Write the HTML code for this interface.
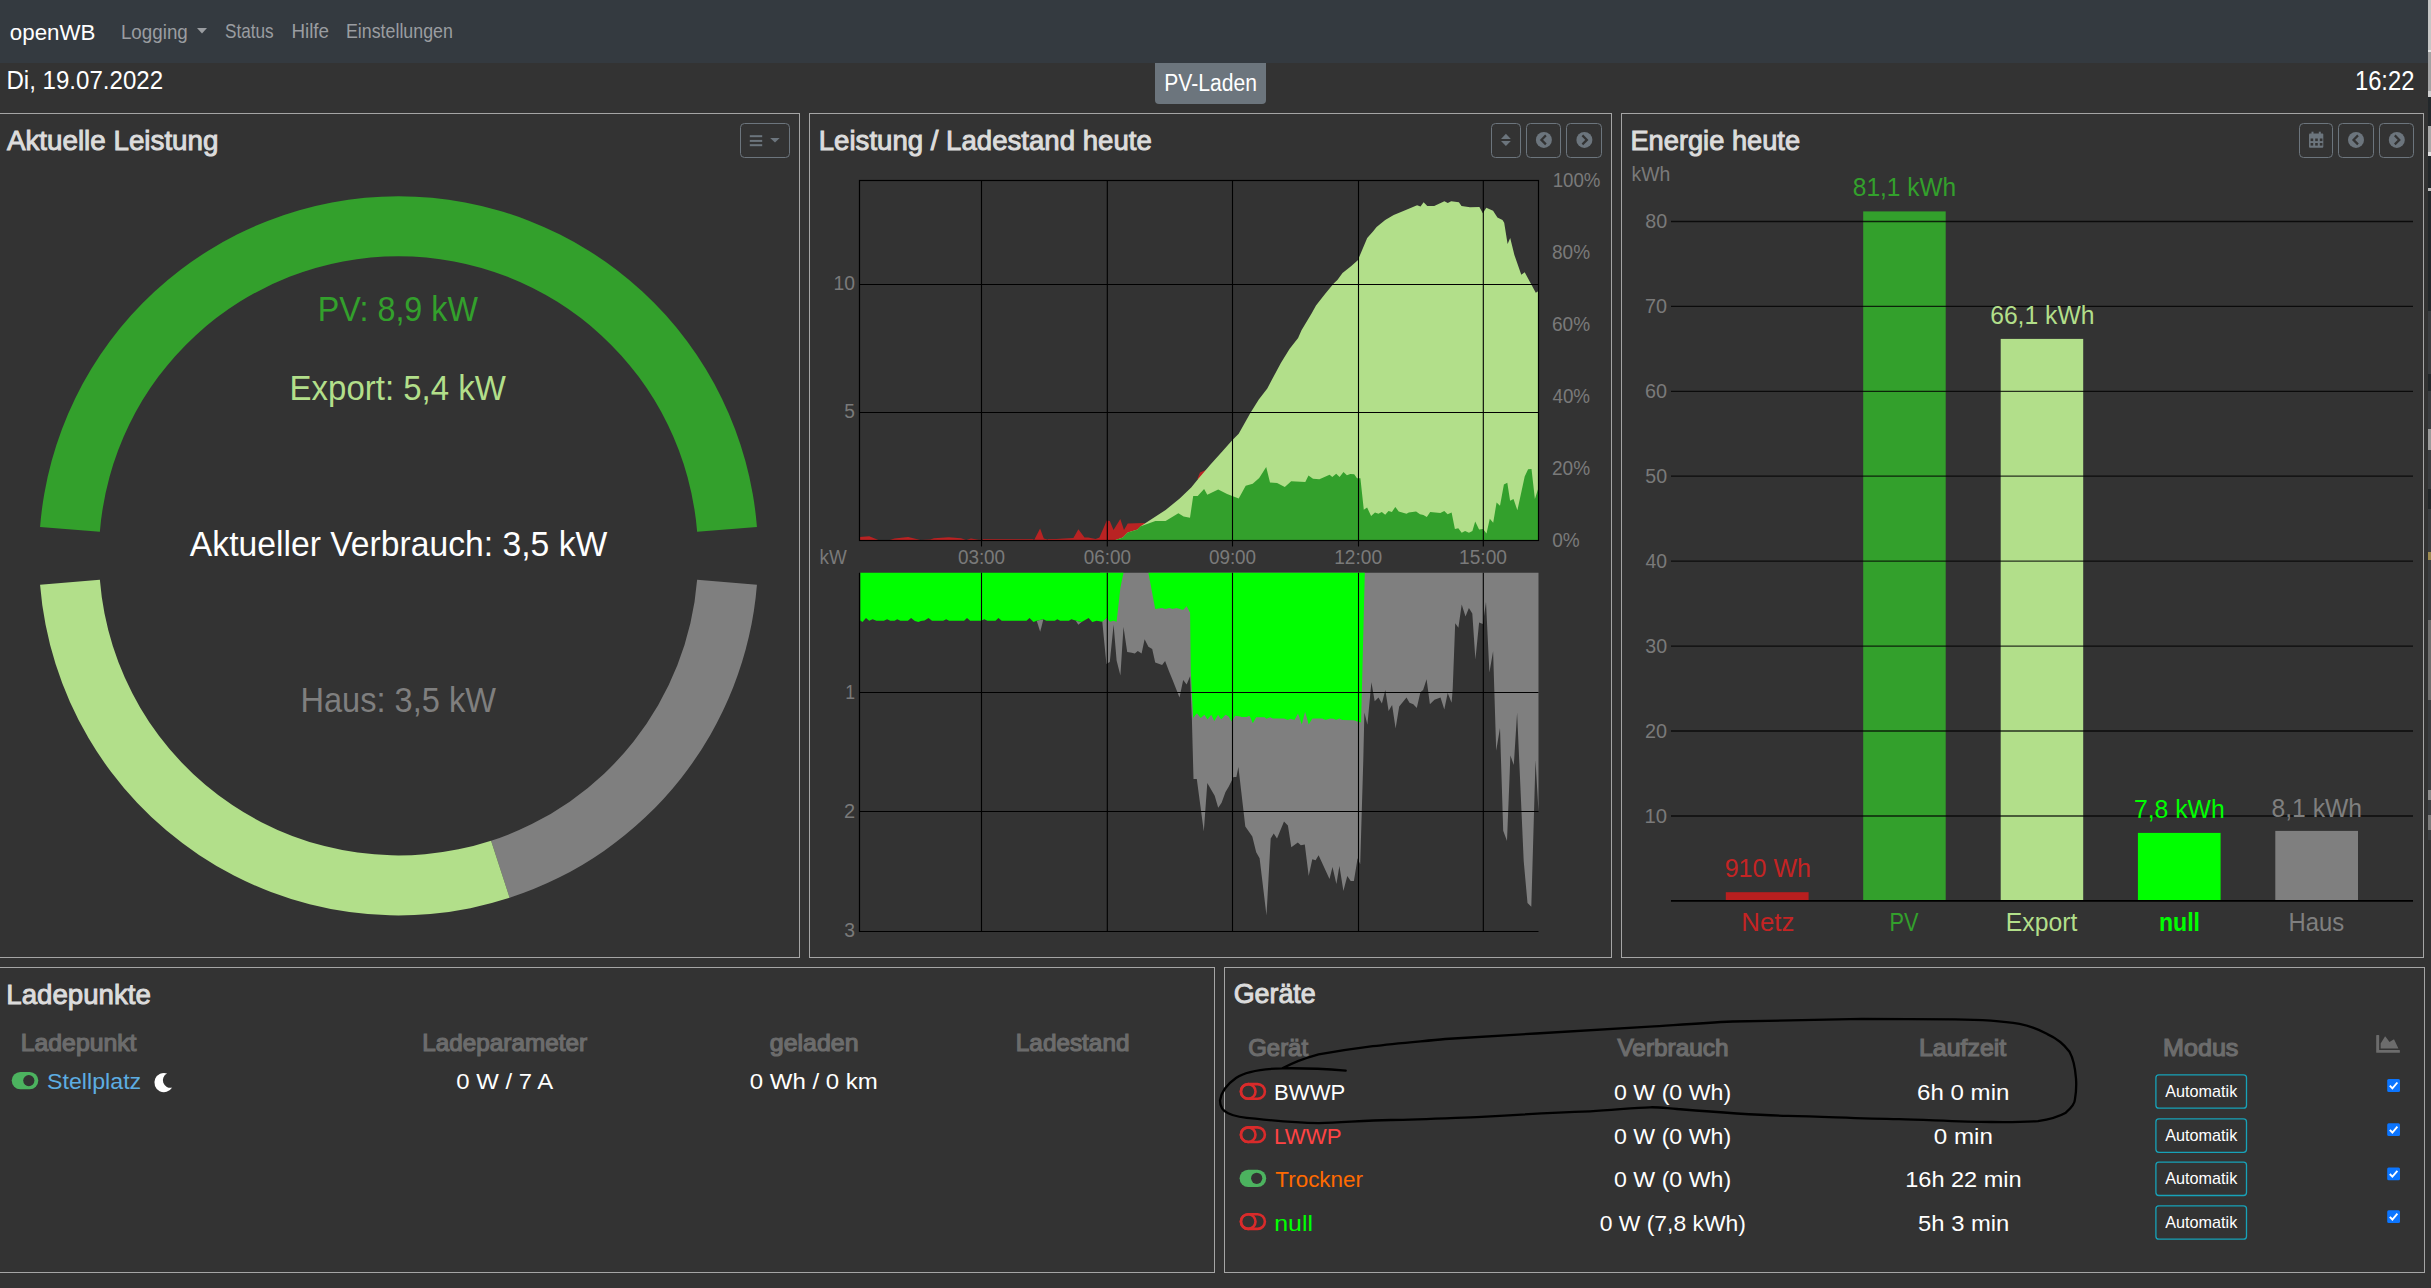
<!DOCTYPE html>
<html lang="de"><head><meta charset="utf-8"><title>openWB</title>
<style>
html,body{margin:0;padding:0;background:#333333;overflow:hidden;}
body{width:2431px;height:1288px;}
svg{display:block;font-family:"Liberation Sans",sans-serif;}
</style></head>
<body>
<svg width="2431" height="1288" viewBox="0 0 2431 1288">
<rect x="0" y="0" width="2431" height="1288" fill="#333333"/>
<rect x="0" y="0" width="2431" height="63" fill="#343a40"/>
<rect x="2428" y="0" width="3" height="50" fill="#c6c6c6"/>
<rect x="2428" y="50" width="3" height="2" fill="#e6e6e6"/>
<rect x="2428" y="52" width="3" height="39" fill="#a2a2a2"/>
<rect x="2428" y="91" width="3" height="6" fill="#cfcfcf"/>
<rect x="2428" y="97" width="3" height="29" fill="#23282b"/>
<rect x="2428" y="126" width="3" height="26" fill="#a8a8a8"/>
<rect x="2428" y="152" width="3" height="4" fill="#e0e0e0"/>
<rect x="2428" y="156" width="3" height="32" fill="#23282b"/>
<rect x="2428" y="188" width="3" height="3" fill="#bdbdbd"/>
<rect x="2428" y="191" width="3" height="120" fill="#23282b"/>
<rect x="2428" y="311" width="3" height="63" fill="#3b3e41"/>
<rect x="2428" y="374" width="3" height="17" fill="#23282b"/>
<rect x="2428" y="391" width="3" height="98" fill="#3b3e41"/>
<rect x="2428" y="429" width="3" height="21" fill="#9a9a9a"/>
<rect x="2428" y="489" width="3" height="20" fill="#23282b"/>
<rect x="2428" y="509" width="3" height="331" fill="#3b3e41"/>
<rect x="2428" y="552" width="3" height="8" fill="#9c8a50"/>
<rect x="2428" y="620" width="3" height="80" fill="#6e6e6e"/>
<rect x="2428" y="790" width="3" height="10" fill="#8a8a8a"/>
<rect x="2428" y="815" width="3" height="15" fill="#7a7a7a"/>
<text x="9.81" y="39.60" font-size="22.90" fill="#ffffff" textLength="85.62" lengthAdjust="spacingAndGlyphs">openWB</text>
<text x="120.90" y="38.50" font-size="21.01" fill="#9a9da1" textLength="66.91" lengthAdjust="spacingAndGlyphs">Logging</text>
<path d="M197,28 L207,28 L202,33.5Z" fill="#9a9da1"/>
<text x="225.03" y="38.10" font-size="20.29" fill="#9a9da1" textLength="48.67" lengthAdjust="spacingAndGlyphs">Status</text>
<text x="291.39" y="38.10" font-size="20.29" fill="#9a9da1" textLength="37.66" lengthAdjust="spacingAndGlyphs">Hilfe</text>
<text x="345.98" y="38.10" font-size="20.29" fill="#9a9da1" textLength="106.87" lengthAdjust="spacingAndGlyphs">Einstellungen</text>
<text x="6.47" y="89.10" font-size="26.38" fill="#ffffff" textLength="156.63" lengthAdjust="spacingAndGlyphs">Di, 19.07.2022</text>
<path d="M1155,63 H1266 V100 Q1266,104 1262,104 H1159 Q1155,104 1155,100 Z" fill="#6c757d"/>
<text x="1164.21" y="91.00" font-size="23.33" fill="#ffffff" textLength="92.72" lengthAdjust="spacingAndGlyphs">PV-Laden</text>
<text x="2354.92" y="89.50" font-size="26.81" fill="#ffffff" textLength="59.53" lengthAdjust="spacingAndGlyphs">16:22</text>
<rect x="-4.5" y="113.5" width="804" height="844" fill="none" stroke="#a5a5a5" stroke-width="1"/>
<rect x="809.5" y="113.5" width="802" height="844" fill="none" stroke="#a5a5a5" stroke-width="1"/>
<rect x="1621.5" y="113.5" width="802" height="844" fill="none" stroke="#a5a5a5" stroke-width="1"/>
<rect x="-4.5" y="967.5" width="1219" height="305" fill="none" stroke="#a5a5a5" stroke-width="1"/>
<rect x="1224.5" y="967.5" width="1200" height="305" fill="none" stroke="#a5a5a5" stroke-width="1"/>
<text x="6.94" y="149.80" font-size="27.39" fill="#dcdcdc" stroke="#dcdcdc" stroke-width="0.96" textLength="211.51" lengthAdjust="spacingAndGlyphs">Aktuelle Leistung</text>
<text x="818.77" y="149.80" font-size="27.39" fill="#dcdcdc" stroke="#dcdcdc" stroke-width="0.96" textLength="333.00" lengthAdjust="spacingAndGlyphs">Leistung / Ladestand heute</text>
<text x="1630.40" y="149.80" font-size="27.39" fill="#dcdcdc" stroke="#dcdcdc" stroke-width="0.96" textLength="169.71" lengthAdjust="spacingAndGlyphs">Energie heute</text>
<text x="6.27" y="1004.20" font-size="27.83" fill="#dcdcdc" stroke="#dcdcdc" stroke-width="0.97" textLength="144.55" lengthAdjust="spacingAndGlyphs">Ladepunkte</text>
<text x="1233.64" y="1003.40" font-size="27.39" fill="#dcdcdc" stroke="#dcdcdc" stroke-width="0.96" textLength="82.17" lengthAdjust="spacingAndGlyphs">Geräte</text>
<rect x="740.5" y="123.5" width="49" height="34" rx="4" fill="none" stroke="#6c757d" stroke-width="1"/>
<rect x="749.8" y="135.2" width="12.4" height="2" fill="#6c757d"/>
<rect x="749.8" y="139.9" width="12.4" height="2" fill="#6c757d"/>
<rect x="749.8" y="144.2" width="12.4" height="2" fill="#6c757d"/>
<path d="M770.2,137.9 L779.7,137.9 L775,142.5Z" fill="#6c757d"/>
<rect x="1491.5" y="123.5" width="29" height="34" rx="4" fill="none" stroke="#6c757d" stroke-width="1"/>
<rect x="1526.5" y="123.5" width="34" height="34" rx="4" fill="none" stroke="#6c757d" stroke-width="1"/>
<rect x="1566.5" y="123.5" width="35" height="34" rx="4" fill="none" stroke="#6c757d" stroke-width="1"/>
<path d="M1501,138.9 L1510.8,138.9 L1505.9,133.7Z" fill="#6c757d"/>
<path d="M1501,140.9 L1510.8,140.9 L1505.9,146.1Z" fill="#6c757d"/>
<circle cx="1543.9" cy="139.9" r="8" fill="#6c757d"/>
<path d="M1545.9,135.4 L1541.4,139.9 L1545.9,144.4" fill="none" stroke="#333333" stroke-width="2.2"/>
<circle cx="1584.4" cy="139.9" r="8" fill="#6c757d"/>
<path d="M1582.4,135.4 L1586.9,139.9 L1582.4,144.4" fill="none" stroke="#333333" stroke-width="2.2"/>
<rect x="2299.5" y="123.5" width="33" height="34" rx="4" fill="none" stroke="#6c757d" stroke-width="1"/>
<rect x="2338.5" y="123.5" width="35" height="34" rx="4" fill="none" stroke="#6c757d" stroke-width="1"/>
<rect x="2379.5" y="123.5" width="34" height="34" rx="4" fill="none" stroke="#6c757d" stroke-width="1"/>
<rect x="2309" y="133.5" width="14.3" height="14.3" fill="#6c757d" rx="1"/>
<rect x="2311.5" y="131.7" width="2" height="3" fill="#6c757d"/>
<rect x="2318.8" y="131.7" width="2" height="3" fill="#6c757d"/>
<rect x="2310.6" y="138.5" width="2.6" height="2.6" fill="#333333"/>
<rect x="2310.6" y="143" width="2.6" height="2.6" fill="#333333"/>
<rect x="2315.2" y="138.5" width="2.6" height="2.6" fill="#333333"/>
<rect x="2315.2" y="143" width="2.6" height="2.6" fill="#333333"/>
<rect x="2319.8" y="138.5" width="2.6" height="2.6" fill="#333333"/>
<rect x="2319.8" y="143" width="2.6" height="2.6" fill="#333333"/>
<circle cx="2356" cy="139.9" r="8" fill="#6c757d"/>
<path d="M2358,135.4 L2353.5,139.9 L2358,144.4" fill="none" stroke="#333333" stroke-width="2.2"/>
<circle cx="2396.8" cy="139.9" r="8" fill="#6c757d"/>
<path d="M2394.8,135.4 L2399.3,139.9 L2394.8,144.4" fill="none" stroke="#333333" stroke-width="2.2"/>
<path d="M40.06,526.96 A359.6,359.6 0 0 1 756.94,526.96 L697.13,531.77 A299.6,299.6 0 0 0 99.87,531.77 Z" fill="#33a02c"/>
<path d="M756.94,584.64 A359.6,359.6 0 0 1 509.62,897.80 L491.08,840.74 A299.6,299.6 0 0 0 697.13,579.83 Z" fill="#7f7f7f"/>
<path d="M509.62,897.80 A359.6,359.6 0 0 1 40.06,584.64 L99.87,579.83 A299.6,299.6 0 0 0 491.08,840.74 Z" fill="#b2df8a"/>
<text x="317.72" y="321.30" font-size="34.93" fill="#33a02c" textLength="160.12" lengthAdjust="spacingAndGlyphs">PV: 8,9 kW</text>
<text x="289.56" y="399.80" font-size="34.93" fill="#b2df8a" textLength="216.33" lengthAdjust="spacingAndGlyphs">Export: 5,4 kW</text>
<text x="189.83" y="555.80" font-size="34.78" fill="#ffffff" textLength="417.43" lengthAdjust="spacingAndGlyphs">Aktueller Verbrauch: 3,5 kW</text>
<text x="300.49" y="711.90" font-size="35.07" fill="#7f7f7f" textLength="195.47" lengthAdjust="spacingAndGlyphs">Haus: 3,5 kW</text>
<path d="M859.7,540.5 L859.7,537.0 L869.2,536.2 L878.4,540.0 L888.3,540.5 L894.5,538.5 L908.1,537.0 L920.4,540.0 L930.3,539.5 L934.0,538.2 L948.8,537.3 L961.1,538.3 L966.1,540.0 L971.0,538.5 L978.4,539.7 L1034.6,539.6 L1035.2,538.0 L1040.1,528.6 L1043.8,538.5 L1047.5,539.5 L1073.4,538.0 L1078.4,529.3 L1084.5,537.5 L1088.2,537.5 L1095.7,539.0 L1099.4,537.5 L1106.8,520.4 L1109.8,521.0 L1113.5,530.0 L1120.3,518.9 L1124.0,530.0 L1127.7,523.6 L1143.8,523.0 L1146.0,524.0 L1141.0,527.0 L1141.0,540.5Z" fill="#b92323"/>
<rect x="983" y="539.2" width="50" height="1.3" fill="#b92323"/>
<rect x="1048" y="539.2" width="25" height="1.3" fill="#b92323"/>
<path d="M1197.5,478.7 L1200.0,472.5 L1206.6,469.7 L1204.0,474.5 L1199.0,480.0Z" fill="#b92323"/>
<path d="M1114.0,540.5 L1122.8,537.5 L1127.7,532.5 L1137.6,529.5 L1141.0,526.1 L1165.6,510.0 L1179.7,498.5 L1191.2,487.6 L1198.3,478.7 L1210.5,464.6 L1222.0,451.7 L1232.2,440.2 L1238.7,433.8 L1250.2,413.3 L1258.8,399.5 L1267.3,388.4 L1281.0,362.8 L1289.5,349.1 L1298.1,338.0 L1301.5,330.3 L1311.7,313.2 L1316.0,305.5 L1325.4,293.6 L1333.9,283.3 L1337.4,279.9 L1342.5,273.1 L1351.0,266.3 L1357.8,260.3 L1367.2,238.1 L1373.2,231.2 L1376.6,227.0 L1385.2,220.1 L1393.7,215.0 L1404.0,210.7 L1417.1,205.3 L1420.5,206.5 L1423.6,202.2 L1427.3,206.0 L1434.2,206.0 L1444.4,201.3 L1447.8,203.1 L1451.2,201.3 L1458.9,202.2 L1461.5,206.0 L1470.0,207.3 L1479.4,207.0 L1482.8,213.3 L1486.3,207.7 L1493.1,210.7 L1497.4,217.6 L1502.5,220.1 L1504.2,222.7 L1507.6,244.0 L1510.2,238.1 L1514.4,255.1 L1521.3,274.8 L1524.7,272.2 L1535.8,292.7 L1538.5,291.0 L1538.5,540.5Z" fill="#b2df8a"/>
<path d="M1114.0,540.5 L1122.8,537.5 L1127.7,532.5 L1137.6,529.5 L1140.0,526.5 L1155.4,520.9 L1165.6,520.9 L1178.4,513.2 L1183.6,516.4 L1190.0,517.7 L1193.2,496.0 L1197.7,496.0 L1204.1,488.9 L1207.3,494.7 L1218.2,489.5 L1227.1,494.0 L1232.2,496.0 L1238.7,498.5 L1245.7,485.7 L1252.7,483.8 L1259.2,478.0 L1266.2,467.1 L1270.0,482.5 L1277.1,483.1 L1284.8,487.0 L1291.2,481.2 L1305.3,481.9 L1308.5,475.5 L1313.0,478.7 L1319.4,479.3 L1329.6,474.8 L1332.3,477.1 L1336.2,473.7 L1339.6,477.1 L1343.5,472.0 L1346.9,475.2 L1350.3,474.1 L1354.2,474.3 L1357.0,478.2 L1360.4,478.2 L1363.8,509.7 L1367.1,507.5 L1371.1,515.9 L1375.0,512.6 L1378.4,513.7 L1381.8,512.0 L1385.2,514.8 L1388.5,510.9 L1391.9,512.0 L1395.3,506.9 L1398.7,511.4 L1406.5,513.7 L1408.8,512.6 L1416.1,511.4 L1420.0,514.2 L1423.4,515.0 L1426.8,517.1 L1430.2,512.0 L1440.3,513.1 L1444.3,510.9 L1447.6,514.2 L1451.6,512.6 L1454.9,528.9 L1458.3,528.3 L1461.7,532.8 L1465.1,531.1 L1469.0,532.8 L1472.4,531.1 L1475.2,521.6 L1479.1,529.4 L1483.1,528.9 L1486.5,533.4 L1489.8,518.8 L1493.2,522.7 L1496.6,502.4 L1500.0,505.8 L1503.9,484.4 L1507.3,482.7 L1510.1,500.7 L1513.5,499.1 L1517.4,510.3 L1524.7,476.5 L1528.1,469.2 L1531.5,468.9 L1534.9,499.1 L1538.5,487.8 L1538.5,540.5Z" fill="#33a02c"/>
<path d="M1100.0,572.8 L1102.3,621.8 L1106.4,664.1 L1109.8,661.9 L1113.6,624.8 L1116.6,660.4 L1120.4,675.5 L1123.5,627.1 L1127.2,652.0 L1131.8,652.8 L1134.8,653.5 L1137.8,651.0 L1141.6,653.5 L1144.6,639.2 L1148.4,646.7 L1152.2,649.0 L1155.2,662.6 L1162.1,664.9 L1165.1,661.1 L1168.9,671.0 L1172.6,680.0 L1179.5,697.4 L1183.2,680.0 L1186.6,684.6 L1190.1,676.2 L1191.9,719.6 L1193.5,779.0 L1196.8,779.0 L1203.8,831.5 L1207.3,783.0 L1214.7,795.8 L1218.2,807.7 L1221.6,802.8 L1225.5,791.9 L1228.5,786.9 L1233.5,777.0 L1236.4,777.0 L1238.4,767.1 L1245.3,826.5 L1252.3,836.4 L1256.2,852.3 L1259.6,858.2 L1266.5,915.6 L1270.7,838.4 L1273.7,833.5 L1277.0,838.4 L1284.0,821.6 L1287.9,825.5 L1291.3,847.3 L1297.8,842.4 L1300.8,845.3 L1304.8,844.4 L1308.7,876.0 L1312.3,859.2 L1315.6,860.2 L1318.6,855.2 L1329.5,879.0 L1332.5,867.1 L1336.4,884.0 L1339.4,866.1 L1343.4,890.9 L1347.3,876.0 L1350.7,881.0 L1353.9,881.0 L1357.6,858.2 L1360.2,864.2 L1363.3,760.0 L1364.4,712.6 L1367.4,724.7 L1371.4,682.3 L1374.7,701.3 L1378.5,697.5 L1381.9,703.5 L1385.3,689.9 L1388.6,711.1 L1392.1,705.0 L1395.6,728.5 L1399.2,706.6 L1406.5,697.5 L1409.5,702.8 L1413.3,704.3 L1416.8,708.1 L1420.4,692.2 L1423.1,689.9 L1426.6,679.3 L1429.9,704.3 L1434.5,699.7 L1440.5,697.5 L1444.3,709.6 L1447.7,692.9 L1451.6,702.8 L1452.7,689.1 L1455.2,623.3 L1458.4,627.8 L1461.7,604.4 L1465.5,616.5 L1468.9,608.1 L1472.3,613.4 L1475.4,659.6 L1479.1,622.5 L1482.9,624.0 L1486.0,602.1 L1489.4,672.5 L1493.1,651.3 L1494.3,690.0 L1496.2,750.8 L1500.0,728.0 L1503.2,830.7 L1507.0,841.1 L1510.4,755.6 L1513.8,765.1 L1517.1,712.8 L1523.7,861.1 L1527.5,902.9 L1531.3,906.7 L1535.5,760.3 L1538.5,811.7 L1538.5,572.8Z" fill="#7f7f7f"/>
<path d="M1036.7,620.8 L1040.2,631.7 L1043.4,619.3Z" fill="#7f7f7f"/>
<path d="M1075.7,620.8 L1078.4,624.8 L1081.6,622.1Z" fill="#7f7f7f"/>
<path d="M860.3,572.8 L860.3,620.5 L862.5,622.1 L866.0,618.1 L869.2,620.8 L872.6,619.2 L876.4,620.8 L883.9,620.8 L887.1,619.3 L890.3,620.8 L894.6,620.8 L897.2,619.3 L900.5,620.8 L907.9,620.8 L911.1,618.1 L914.9,621.0 L918.4,622.1 L920.8,621.0 L924.5,620.5 L928.5,618.1 L932.0,620.8 L943.2,620.8 L946.2,619.3 L949.1,620.8 L964.1,620.8 L967.0,618.1 L970.2,620.8 L981.2,620.8 L984.3,619.3 L987.5,620.8 L995.5,620.8 L998.4,618.1 L1001.7,620.8 L1026.5,620.8 L1029.5,618.1 L1033.5,622.1 L1036.7,620.8 L1043.4,619.3 L1046.3,620.8 L1054.9,620.8 L1057.3,619.3 L1060.2,620.8 L1068.8,620.8 L1071.4,619.3 L1076.3,620.8 L1081.6,622.1 L1088.6,618.1 L1092.3,622.1 L1096.6,620.8 L1102.3,621.8 L1106.8,618.0 L1109.8,621.8 L1113.6,620.7 L1116.6,621.8 L1120.4,587.7 L1123.5,572.8Z" fill="#00ff00"/>
<path d="M1148.4,572.8 L1155.2,608.9 L1162.1,608.1 L1165.1,608.9 L1169.6,608.1 L1172.6,608.9 L1176.4,608.1 L1183.2,610.0 L1186.6,606.2 L1190.1,612.7 L1190.8,671.0 L1193.1,717.9 L1196.9,713.3 L1200.7,717.9 L1204.4,714.8 L1207.5,719.4 L1211.2,714.8 L1214.3,720.9 L1218.1,714.8 L1221.1,719.4 L1225.6,714.8 L1228.6,716.4 L1231.7,721.6 L1235.2,715.8 L1240.4,716.4 L1241.5,717.0 L1246.7,717.0 L1249.0,716.1 L1249.9,716.4 L1252.8,723.3 L1256.2,717.3 L1262.8,717.3 L1264.6,717.3 L1266.3,718.7 L1270.3,717.2 L1272.9,718.4 L1284.1,718.4 L1287.6,719.9 L1290.5,718.7 L1294.5,719.9 L1298.0,713.5 L1301.8,724.6 L1305.1,711.7 L1308.7,724.6 L1312.4,718.5 L1316.4,718.4 L1322.2,718.4 L1325.6,719.9 L1330.2,718.4 L1333.7,718.7 L1336.0,719.9 L1339.4,718.5 L1342.3,719.9 L1353.8,720.2 L1357.3,721.6 L1361.1,722.5 L1364.8,572.8Z" fill="#00ff00"/>
<path d="M981.5,180.5 V546.5 M981.5,572.8 V931.5 M1107.3,180.5 V546.5 M1107.3,572.8 V931.5 M1232.5,180.5 V546.5 M1232.5,572.8 V931.5 M1358.5,180.5 V546.5 M1358.5,572.8 V931.5 M1483.3,180.5 V546.5 M1483.3,572.8 V931.5 M859.5,284.5 H1538.5 M859.5,412.5 H1538.5 M859.5,692.5 H1538.5 M859.5,811.5 H1538.5" stroke="#000000" stroke-width="1.1" fill="none"/>
<rect x="859.5" y="180.5" width="679.0" height="360.0" fill="none" stroke="#000000" stroke-width="1.2"/>
<path d="M859.5,572.8 V931.5 H1538.5" fill="none" stroke="#000000" stroke-width="1.2"/>
<text x="833.45" y="289.80" font-size="20.00" fill="#7a7a7a" textLength="21.46" lengthAdjust="spacingAndGlyphs">10</text>
<text x="844.23" y="418.20" font-size="20.00" fill="#7a7a7a" textLength="10.66" lengthAdjust="spacingAndGlyphs">5</text>
<text x="819.48" y="563.90" font-size="19.86" fill="#7a7a7a" textLength="27.20" lengthAdjust="spacingAndGlyphs">kW</text>
<text x="957.89" y="564.00" font-size="19.71" fill="#7a7a7a" textLength="47.26" lengthAdjust="spacingAndGlyphs">03:00</text>
<text x="1083.69" y="564.00" font-size="19.71" fill="#7a7a7a" textLength="47.26" lengthAdjust="spacingAndGlyphs">06:00</text>
<text x="1208.89" y="564.00" font-size="19.71" fill="#7a7a7a" textLength="47.26" lengthAdjust="spacingAndGlyphs">09:00</text>
<text x="1334.21" y="564.00" font-size="19.71" fill="#7a7a7a" textLength="47.95" lengthAdjust="spacingAndGlyphs">12:00</text>
<text x="1459.01" y="564.00" font-size="19.71" fill="#7a7a7a" textLength="47.95" lengthAdjust="spacingAndGlyphs">15:00</text>
<text x="845.17" y="698.50" font-size="20.00" fill="#7a7a7a" textLength="9.83" lengthAdjust="spacingAndGlyphs">1</text>
<text x="844.00" y="818.00" font-size="20.00" fill="#7a7a7a" textLength="11.12" lengthAdjust="spacingAndGlyphs">2</text>
<text x="844.23" y="937.40" font-size="20.00" fill="#7a7a7a" textLength="10.77" lengthAdjust="spacingAndGlyphs">3</text>
<text x="1552.70" y="187.10" font-size="20.72" fill="#7a7a7a" textLength="47.81" lengthAdjust="spacingAndGlyphs">100%</text>
<text x="1552.04" y="259.10" font-size="20.72" fill="#7a7a7a" textLength="38.05" lengthAdjust="spacingAndGlyphs">80%</text>
<text x="1551.95" y="331.10" font-size="20.72" fill="#7a7a7a" textLength="38.15" lengthAdjust="spacingAndGlyphs">60%</text>
<text x="1552.43" y="403.10" font-size="20.72" fill="#7a7a7a" textLength="37.66" lengthAdjust="spacingAndGlyphs">40%</text>
<text x="1551.95" y="475.10" font-size="20.72" fill="#7a7a7a" textLength="38.15" lengthAdjust="spacingAndGlyphs">20%</text>
<text x="1552.14" y="547.10" font-size="20.72" fill="#7a7a7a" textLength="27.53" lengthAdjust="spacingAndGlyphs">0%</text>
<text x="1631.54" y="181.10" font-size="20.29" fill="#7a7a7a" textLength="38.82" lengthAdjust="spacingAndGlyphs">kWh</text>
<text x="1644.58" y="822.67" font-size="20.29" fill="#7a7a7a" textLength="22.58" lengthAdjust="spacingAndGlyphs">10</text>
<text x="1645.11" y="737.74" font-size="20.29" fill="#7a7a7a" textLength="22.03" lengthAdjust="spacingAndGlyphs">20</text>
<text x="1645.32" y="652.81" font-size="20.29" fill="#7a7a7a" textLength="21.81" lengthAdjust="spacingAndGlyphs">30</text>
<text x="1645.62" y="567.88" font-size="20.29" fill="#7a7a7a" textLength="21.50" lengthAdjust="spacingAndGlyphs">40</text>
<text x="1645.32" y="482.95" font-size="20.29" fill="#7a7a7a" textLength="21.81" lengthAdjust="spacingAndGlyphs">50</text>
<text x="1645.11" y="398.02" font-size="20.29" fill="#7a7a7a" textLength="22.03" lengthAdjust="spacingAndGlyphs">60</text>
<text x="1645.11" y="313.09" font-size="20.29" fill="#7a7a7a" textLength="22.03" lengthAdjust="spacingAndGlyphs">70</text>
<text x="1645.21" y="228.16" font-size="20.29" fill="#7a7a7a" textLength="21.92" lengthAdjust="spacingAndGlyphs">80</text>
<rect x="1725.8" y="892.2" width="82.8" height="8.7" fill="#b81f1f"/>
<rect x="1863.2" y="211.4" width="82.5" height="689.5" fill="#33a02c"/>
<rect x="2000.7" y="338.9" width="82.5" height="562" fill="#b2df8a"/>
<rect x="2137.9" y="832.9" width="82.7" height="68" fill="#00ff00"/>
<rect x="2275.3" y="830.9" width="82.7" height="70" fill="#7f7f7f"/>
<path d="M1671,816.0 H2413 M1671,731.0 H2413 M1671,646.1 H2413 M1671,561.2 H2413 M1671,476.2 H2413 M1671,391.3 H2413 M1671,306.4 H2413 M1671,221.5 H2413" stroke="#000" stroke-opacity="0.78" stroke-width="1.3" fill="none"/>
<path d="M1671,900.9 H2413" stroke="#000" stroke-width="1.6" fill="none"/>
<text x="1852.80" y="195.70" font-size="25.94" fill="#33a02c" textLength="103.37" lengthAdjust="spacingAndGlyphs">81,1 kWh</text>
<text x="1990.17" y="324.30" font-size="25.94" fill="#b2df8a" textLength="104.32" lengthAdjust="spacingAndGlyphs">66,1 kWh</text>
<text x="1724.67" y="876.80" font-size="25.94" fill="#c42424" textLength="86.29" lengthAdjust="spacingAndGlyphs">910 Wh</text>
<text x="2133.96" y="818.40" font-size="25.94" fill="#00ff00" textLength="90.72" lengthAdjust="spacingAndGlyphs">7,8 kWh</text>
<text x="2271.49" y="816.70" font-size="25.94" fill="#7f7f7f" textLength="90.59" lengthAdjust="spacingAndGlyphs">8,1 kWh</text>
<text x="1741.34" y="930.80" font-size="25.94" fill="#c42424" textLength="52.98" lengthAdjust="spacingAndGlyphs">Netz</text>
<text x="1889.57" y="930.80" font-size="25.94" fill="#33a02c" textLength="28.93" lengthAdjust="spacingAndGlyphs">PV</text>
<text x="2005.82" y="930.80" font-size="25.94" fill="#b2df8a" textLength="71.53" lengthAdjust="spacingAndGlyphs">Export</text>
<text x="2159.00" y="930.80" font-size="25.94" fill="#00ff00" font-weight="bold" textLength="40.97" lengthAdjust="spacingAndGlyphs">null</text>
<text x="2288.59" y="930.80" font-size="25.94" fill="#7f7f7f" textLength="55.73" lengthAdjust="spacingAndGlyphs">Haus</text>
<text x="20.80" y="1050.90" font-size="23.19" fill="#6c6c6c" stroke="#6c6c6c" stroke-width="1.16" textLength="115.69" lengthAdjust="spacingAndGlyphs">Ladepunkt</text>
<text x="422.34" y="1051.10" font-size="23.19" fill="#6c6c6c" stroke="#6c6c6c" stroke-width="1.16" textLength="164.65" lengthAdjust="spacingAndGlyphs">Ladeparameter</text>
<text x="769.78" y="1051.10" font-size="23.19" fill="#6c6c6c" stroke="#6c6c6c" stroke-width="1.16" textLength="88.75" lengthAdjust="spacingAndGlyphs">geladen</text>
<text x="1015.83" y="1051.10" font-size="23.19" fill="#6c6c6c" stroke="#6c6c6c" stroke-width="1.16" textLength="113.64" lengthAdjust="spacingAndGlyphs">Ladestand</text>
<rect x="11.7" y="1072" width="26.6" height="17.2" rx="8.6" fill="#4cb35f"/>
<circle cx="28.80" cy="1080.6" r="5.6" fill="#333333"/>
<text x="47.06" y="1088.50" font-size="21.45" fill="#5dade2" textLength="94.15" lengthAdjust="spacingAndGlyphs">Stellplatz</text>
<path d="M166.28,1073.11 A9.6,9.6 0 1 0 171.41,1087.18 A7.53,7.53 0 0 1 166.28,1073.11 Z" transform="translate(0.8,0.4)" fill="#ffffff"/>
<text x="456.24" y="1088.80" font-size="22.17" fill="#ffffff" textLength="97.01" lengthAdjust="spacingAndGlyphs">0 W / 7 A</text>
<text x="749.74" y="1088.80" font-size="22.17" fill="#ffffff" textLength="128.03" lengthAdjust="spacingAndGlyphs">0 Wh / 0 km</text>
<text x="1248.18" y="1055.70" font-size="23.19" fill="#6c6c6c" stroke="#6c6c6c" stroke-width="1.16" textLength="59.94" lengthAdjust="spacingAndGlyphs">Gerät</text>
<text x="1617.46" y="1055.90" font-size="23.19" fill="#6c6c6c" stroke="#6c6c6c" stroke-width="1.16" textLength="111.16" lengthAdjust="spacingAndGlyphs">Verbrauch</text>
<text x="1918.98" y="1055.90" font-size="23.19" fill="#6c6c6c" stroke="#6c6c6c" stroke-width="1.16" textLength="87.34" lengthAdjust="spacingAndGlyphs">Laufzeit</text>
<text x="2163.07" y="1056.10" font-size="23.19" fill="#6c6c6c" stroke="#6c6c6c" stroke-width="1.16" textLength="75.37" lengthAdjust="spacingAndGlyphs">Modus</text>
<path transform="translate(2376.2,1032.1) scale(0.0463)" d="M500 384c6.6 0 12 5.4 12 12v40c0 6.6-5.4 12-12 12H12c-6.6 0-12-5.4-12-12V76c0-6.6 5.4-12 12-12h40c6.6 0 12 5.4 12 12v308h436zM372.7 159.5L288 216l-85.3-113.7c-5.1-6.8-15.5-6.3-19.9 1L96 248v104h384l-89.9-187.8c-3.2-6.5-11.4-8.7-17.4-4.7z" fill="#6c6c6c"/>
<rect x="1240.8999999999999" y="1084.1" width="24.0" height="14.6" rx="7.3" fill="none" stroke="#d92b2b" stroke-width="2.6"/>
<circle cx="1248.1999999999998" cy="1091.3999999999999" r="7.3" fill="none" stroke="#d92b2b" stroke-width="2.6"/>
<text x="1274.13" y="1099.50" font-size="21.88" fill="#ffffff" textLength="71.21" lengthAdjust="spacingAndGlyphs">BWWP</text>
<text x="1614.07" y="1099.50" font-size="22.17" fill="#ffffff" textLength="117.03" lengthAdjust="spacingAndGlyphs">0 W (0 Wh)</text>
<text x="1917.10" y="1099.50" font-size="22.17" fill="#ffffff" textLength="92.28" lengthAdjust="spacingAndGlyphs">6h 0 min</text>
<rect x="2155.9" y="1074.8" width="90.6" height="33.4" rx="3" fill="none" stroke="#17a2b8" stroke-width="1.3"/>
<text x="2165.22" y="1096.60" font-size="16.38" fill="#ffffff" textLength="72.10" lengthAdjust="spacingAndGlyphs">Automatik</text>
<rect x="2387.2" y="1079.1" width="12.8" height="12.8" rx="1.5" fill="#0b75ff"/>
<path d="M2389.8,1085.6999999999998 L2392.4,1088.3999999999999 L2397.4,1082.5" fill="none" stroke="#ffffff" stroke-width="1.9"/>
<rect x="1240.8999999999999" y="1127.3999999999999" width="24.0" height="14.6" rx="7.3" fill="none" stroke="#d92b2b" stroke-width="2.6"/>
<circle cx="1248.1999999999998" cy="1134.6999999999998" r="7.3" fill="none" stroke="#d92b2b" stroke-width="2.6"/>
<text x="1274.12" y="1143.60" font-size="21.88" fill="#ff4444" textLength="67.63" lengthAdjust="spacingAndGlyphs">LWWP</text>
<text x="1614.07" y="1143.60" font-size="22.17" fill="#ffffff" textLength="117.03" lengthAdjust="spacingAndGlyphs">0 W (0 Wh)</text>
<text x="1933.83" y="1143.60" font-size="22.17" fill="#ffffff" textLength="59.04" lengthAdjust="spacingAndGlyphs">0 min</text>
<rect x="2155.9" y="1118.9" width="90.6" height="33.4" rx="3" fill="none" stroke="#17a2b8" stroke-width="1.3"/>
<text x="2165.22" y="1140.70" font-size="16.38" fill="#ffffff" textLength="72.10" lengthAdjust="spacingAndGlyphs">Automatik</text>
<rect x="2387.2" y="1123.2" width="12.8" height="12.8" rx="1.5" fill="#0b75ff"/>
<path d="M2389.8,1129.8 L2392.4,1132.5 L2397.4,1126.6000000000001" fill="none" stroke="#ffffff" stroke-width="1.9"/>
<rect x="1239.6" y="1169.7" width="26.6" height="17.2" rx="8.6" fill="#4cb35f"/>
<circle cx="1256.70" cy="1178.3" r="5.6" fill="#333333"/>
<text x="1275.34" y="1186.80" font-size="21.88" fill="#ff6a00" textLength="87.67" lengthAdjust="spacingAndGlyphs">Trockner</text>
<text x="1614.07" y="1186.80" font-size="22.17" fill="#ffffff" textLength="117.03" lengthAdjust="spacingAndGlyphs">0 W (0 Wh)</text>
<text x="1905.23" y="1186.80" font-size="22.17" fill="#ffffff" textLength="116.46" lengthAdjust="spacingAndGlyphs">16h 22 min</text>
<rect x="2155.9" y="1162.1" width="90.6" height="33.4" rx="3" fill="none" stroke="#17a2b8" stroke-width="1.3"/>
<text x="2165.22" y="1183.90" font-size="16.38" fill="#ffffff" textLength="72.10" lengthAdjust="spacingAndGlyphs">Automatik</text>
<rect x="2387.2" y="1167.4" width="12.8" height="12.8" rx="1.5" fill="#0b75ff"/>
<path d="M2389.8,1174.0 L2392.4,1176.7 L2397.4,1170.8000000000002" fill="none" stroke="#ffffff" stroke-width="1.9"/>
<rect x="1240.8999999999999" y="1214.3" width="24.0" height="14.6" rx="7.3" fill="none" stroke="#d92b2b" stroke-width="2.6"/>
<circle cx="1248.1999999999998" cy="1221.6" r="7.3" fill="none" stroke="#d92b2b" stroke-width="2.6"/>
<text x="1274.28" y="1230.50" font-size="21.88" fill="#00ff00" textLength="38.78" lengthAdjust="spacingAndGlyphs">null</text>
<text x="1599.68" y="1230.50" font-size="22.17" fill="#ffffff" textLength="146.30" lengthAdjust="spacingAndGlyphs">0 W (7,8 kWh)</text>
<text x="1918.05" y="1230.50" font-size="22.17" fill="#ffffff" textLength="91.31" lengthAdjust="spacingAndGlyphs">5h 3 min</text>
<rect x="2155.9" y="1205.8" width="90.6" height="33.4" rx="3" fill="none" stroke="#17a2b8" stroke-width="1.3"/>
<text x="2165.22" y="1227.60" font-size="16.38" fill="#ffffff" textLength="72.10" lengthAdjust="spacingAndGlyphs">Automatik</text>
<rect x="2387.2" y="1210.2" width="12.8" height="12.8" rx="1.5" fill="#0b75ff"/>
<path d="M2389.8,1216.8 L2392.4,1219.5 L2397.4,1213.6000000000001" fill="none" stroke="#ffffff" stroke-width="1.9"/>
<path d="M1345.7,1070.6 C1320,1068.5 1300,1068 1282.4,1068.3 C1262,1068.8 1246,1071 1236,1078 C1226,1085 1221,1093 1220,1100.5 C1220,1107 1223,1111 1228.1,1113.2 C1236,1117 1245,1118 1255.2,1118.6 C1280,1121.5 1300,1123 1318.6,1123.1 C1345,1122.5 1365,1120 1391,1120 C1420,1119.5 1450,1118 1481.5,1116.8 C1520,1114.5 1560,1112.5 1590.1,1111.4 C1615,1110 1635,1107.5 1650,1107.3 C1660,1107 1668,1108.5 1677,1109 C1720,1112.5 1750,1115 1788.1,1115.9 C1830,1117 1860,1118.5 1899.2,1119.2 C1930,1120 1960,1121.8 1991.7,1122 C2010,1122.2 2025,1122 2038,1121.1 C2052,1119 2060,1116 2065.8,1112.7 C2071,1108 2075,1103 2075,1098.9 C2076.5,1090 2076.5,1085 2076,1078.5 C2075,1065 2073,1058 2069.5,1051.7 C2063,1043 2056,1038 2047.3,1034.1 C2038,1029 2030,1026 2019.5,1023.9 C2000,1020.5 1980,1019.5 1954.7,1019.3 C1920,1019 1890,1018.8 1862.1,1018.9 C1815,1019.5 1770,1020.5 1732.6,1021.5 C1700,1023 1670,1025.5 1650,1026.7 C1610,1029 1570,1031.5 1535.8,1033.5 C1500,1035.5 1470,1037.5 1445.3,1039 C1420,1041.5 1395,1043.5 1372.9,1046.2 C1355,1048.5 1335,1051.5 1318.6,1054.3 C1305,1058 1292,1063 1282.4,1068.3" fill="none" stroke="#000000" stroke-width="2.3" stroke-linecap="round" stroke-linejoin="round"/>
</svg>
</body></html>
